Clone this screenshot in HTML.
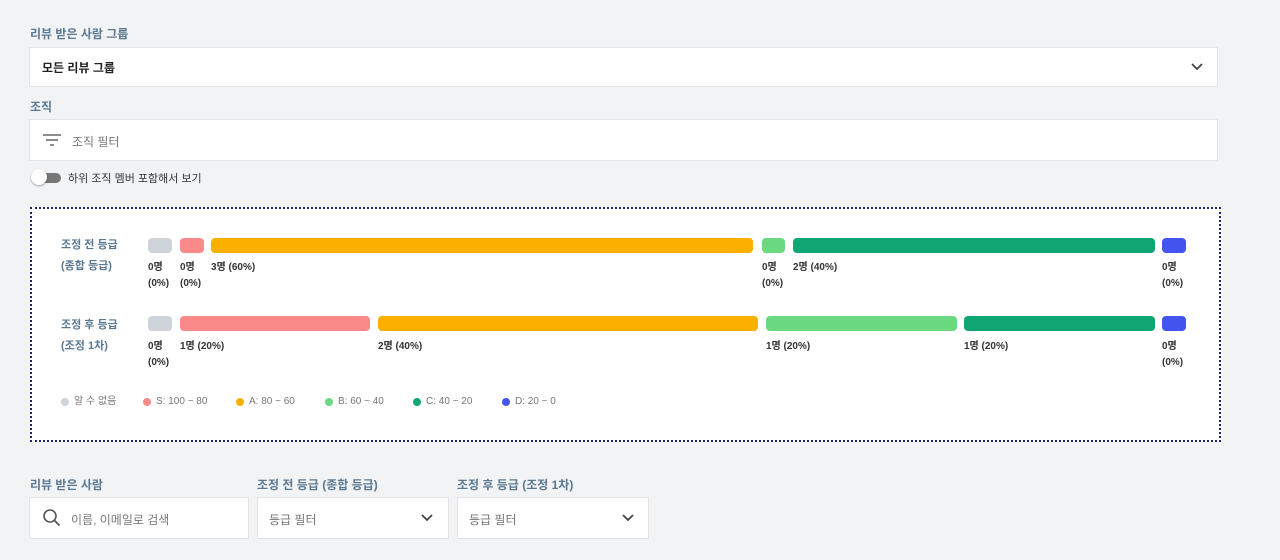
<!DOCTYPE html>
<html><head><meta charset="utf-8"><style>
*{box-sizing:border-box;margin:0;padding:0}
body{width:1280px;height:560px;background:#f2f3f5;font-family:"Liberation Sans","Noto Sans CJK KR",sans-serif;position:relative;overflow:hidden}
.a{position:absolute;white-space:nowrap}
.lbl{font-size:12px;font-weight:bold;color:#5b7891}
.inp{background:#fff;border:1px solid #e2e4e7}
.bar{position:absolute;height:15px;border-radius:4px}
.t{position:absolute;font-size:10px;color:#333;line-height:16px;font-weight:bold}
.lg{position:absolute;font-size:10px;color:#777;top:395px;height:14px;line-height:14px;white-space:nowrap}
.d{position:absolute;top:398px;width:8px;height:8px;border-radius:50%}
.rl{position:absolute;left:61px;font-size:11px;font-weight:bold;color:#5b7891;line-height:21px}
</style></head><body>
<div class="a lbl" style="left:30px;top:25px">리뷰 받은 사람 그룹</div>
<div class="a inp" style="left:29px;top:47px;width:1189px;height:40px"></div>
<div class="a" style="left:42px;top:59px;font-size:12px;font-weight:bold;color:#222">모든 리뷰 그룹</div>
<svg class="a" style="left:1190px;top:61px" width="14" height="12"><path d="M2 3l5 5 5-5" fill="none" stroke="#444" stroke-width="1.8"/></svg>
<div class="a lbl" style="left:30px;top:98px">조직</div>
<div class="a inp" style="left:29px;top:119px;width:1189px;height:42px"></div>
<svg class="a" style="left:42px;top:133px" width="20" height="14"><path d="M1 2h18M4 7h12M8 12h4" stroke="#666" stroke-width="1.6"/></svg>
<div class="a" style="left:72px;top:133px;font-size:12px;color:#777">조직 필터</div>
<div class="a" style="left:33px;top:173px;width:28px;height:10px;border-radius:5px;background:#777"></div>
<div class="a" style="left:31px;top:169px;width:16px;height:16px;border-radius:50%;background:#fff;box-shadow:0 1px 2px rgba(0,0,0,.35)"></div>
<div class="a" style="left:68px;top:170px;font-size:11px;color:#333">하위 조직 멤버 포함해서 보기</div>

<div class="a" style="left:30px;top:207px;width:1191px;height:235px;background:#fff;border:2px dotted #1a2470"></div>
<div class="rl" style="top:235px">조정 전 등급<br>(종합 등급)</div>
<div class="rl" style="top:315px">조정 후 등급<br>(조정 1차)</div>

<div class="bar" style="left:148px;top:238px;width:24px;background:#cfd4da"></div>
<div class="bar" style="left:180px;top:238px;width:24px;background:#fa8a8a"></div>
<div class="bar" style="left:211px;top:238px;width:542px;background:#fbb000"></div>
<div class="bar" style="left:762px;top:238px;width:23px;background:#6bd97f"></div>
<div class="bar" style="left:793px;top:238px;width:362px;background:#10a674"></div>
<div class="bar" style="left:1162px;top:238px;width:24px;background:#4355ee"></div>
<div class="t" style="left:148px;top:260px">0명<br>(0%)</div>
<div class="t" style="left:180px;top:260px">0명<br>(0%)</div>
<div class="t" style="left:211px;top:260px">3명 (60%)</div>
<div class="t" style="left:762px;top:260px">0명<br>(0%)</div>
<div class="t" style="left:793px;top:260px">2명 (40%)</div>
<div class="t" style="left:1162px;top:260px">0명<br>(0%)</div>

<div class="bar" style="left:148px;top:316px;width:24px;background:#cfd4da"></div>
<div class="bar" style="left:180px;top:316px;width:190px;background:#fa8a8a"></div>
<div class="bar" style="left:378px;top:316px;width:380px;background:#fbb000"></div>
<div class="bar" style="left:766px;top:316px;width:191px;background:#6bd97f"></div>
<div class="bar" style="left:964px;top:316px;width:191px;background:#10a674"></div>
<div class="bar" style="left:1162px;top:316px;width:24px;background:#4355ee"></div>
<div class="t" style="left:148px;top:339px">0명<br>(0%)</div>
<div class="t" style="left:180px;top:339px">1명 (20%)</div>
<div class="t" style="left:378px;top:339px">2명 (40%)</div>
<div class="t" style="left:766px;top:339px">1명 (20%)</div>
<div class="t" style="left:964px;top:339px">1명 (20%)</div>
<div class="t" style="left:1162px;top:339px">0명<br>(0%)</div>

<div class="d" style="left:61px;background:#cfd4da"></div><div class="lg" style="left:74px">알 수 없음</div>
<div class="d" style="left:143px;background:#fa8a8a"></div><div class="lg" style="left:156px">S: 100 ~ 80</div>
<div class="d" style="left:236px;background:#fbb000"></div><div class="lg" style="left:249px">A: 80 ~ 60</div>
<div class="d" style="left:325px;background:#6bd97f"></div><div class="lg" style="left:338px">B: 60 ~ 40</div>
<div class="d" style="left:413px;background:#10a674"></div><div class="lg" style="left:426px">C: 40 ~ 20</div>
<div class="d" style="left:502px;background:#4355ee"></div><div class="lg" style="left:515px">D: 20 ~ 0</div>

<div class="a lbl" style="left:30px;top:476px">리뷰 받은 사람</div>
<div class="a lbl" style="left:257px;top:476px">조정 전 등급 (종합 등급)</div>
<div class="a lbl" style="left:457px;top:476px">조정 후 등급 (조정 1차)</div>
<div class="a inp" style="left:29px;top:497px;width:220px;height:42px"></div>
<svg class="a" style="left:42px;top:508px" width="20" height="20"><circle cx="8" cy="8" r="6" fill="none" stroke="#555" stroke-width="1.6"/><path d="M12.5 12.5l5 5" stroke="#555" stroke-width="1.8"/></svg>
<div class="a" style="left:71px;top:511px;font-size:12px;color:#777">이름, 이메일로 검색</div>
<div class="a inp" style="left:257px;top:497px;width:192px;height:42px"></div>
<div class="a" style="left:269px;top:511px;font-size:12px;color:#777">등급 필터</div>
<svg class="a" style="left:420px;top:512px" width="14" height="12"><path d="M2 3l5 5 5-5" fill="none" stroke="#444" stroke-width="1.8"/></svg>
<div class="a inp" style="left:457px;top:497px;width:192px;height:42px"></div>
<div class="a" style="left:469px;top:511px;font-size:12px;color:#777">등급 필터</div>
<svg class="a" style="left:621px;top:512px" width="14" height="12"><path d="M2 3l5 5 5-5" fill="none" stroke="#444" stroke-width="1.8"/></svg>
</body></html>
